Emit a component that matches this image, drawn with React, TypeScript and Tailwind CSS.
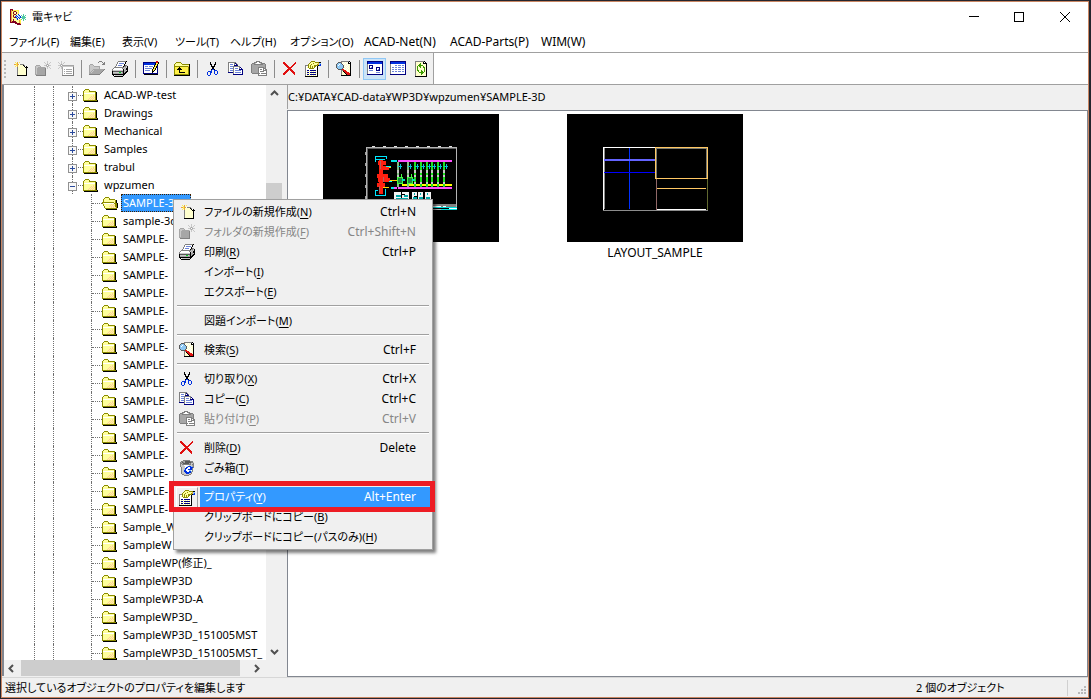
import React from 'react';

/* ---------- pixel icons ---------- */

const COLORS: Record<string, string> = {
    k: '#000000',
    w: '#ffffff',
    g: '#808080',
    h: '#a6a6a6',
    d: '#5a5a5a',
    l: '#c8c8c8',
    y: '#fff04a',
    c: '#ffffce',
    o: '#8c8c00',
    f: '#ffff9c',
    p: '#ffce9c',
    a: '#e8a838',
    b: '#0030e0',
    n: '#000080',
    v: '#6c84d8',
    r: '#e01010',
    m: '#800020',
    s: '#8cc8f4',
    q: '#3c9c00',
    t: '#50c8a0',
    e: '#00d820',
};

const ICONS: Record<string, string[]> = {
    app: [
        'mmm.............',
        'mamyyyyyy.......',
        'mafammyfy.......',
        'mafmfcmfy.......',
        'mafmfcmfy.......',
        'mafammffb....t..',
        'mafmffbwsb.t.t.t',
        'mafmfbsbwsb.ttt.',
        'mafammbwbsbttttt',
        'maffffsbwb..ttt.',
        'mafmfffbffyt.t.t',
        'mafmfffffay..t..',
        'mammmmfffay.....',
        'mmmmmmmffay.....',
        '.....mmmmma.....',
        '.......mmmm.....',
    ],
    newFile: [
        '................',
        '...y.a.y........',
        '....ya..........',
        '..aayaawgggg....',
        '....yaccccckg...',
        '...y.acccccckwk.',
        '.....gccccccckkk',
        '.....gcccccccck.',
        '.....gcccccccck.',
        '.....gcccccccck.',
        '.....gcccccccck.',
        '.....gcccccccck.',
        '.....gcccccccck.',
        '.....gcccccccck.',
        '.....kkkkkkkkkk.',
        '................',
    ],
    newFolder: [
        '............l...',
        '.........l..l..l',
        '..........l.l.l.',
        '...........lhl..',
        '.hhhh....llhwhll',
        'hllllh.....lhl..',
        'hllhhhhhhhl.l.l.',
        'hlhhhhhhhhg.l..l',
        'hlhhhhhhhhg.....',
        'hlhhhhhhhhg.....',
        'hlhhhhhhhhg.....',
        'hlhhhhhhhhg.....',
        'hlhhhhhhhhg.....',
        'hhhhhhhhhhg.....',
        '.gggggggggg.....',
        '................',
    ],
    newList: [
        '...l............',
        'l..l..l.........',
        '.l.l.l..........',
        '..lhl...........',
        'llhwhhhhhhhhhhhh',
        '..lhlllllllllllh',
        '.l.lhwwwwwwwwwwg',
        'l..lhwwwwwwwwwwg',
        '....hwhwhhhhhhwg',
        '....hwwwwwwwwwwg',
        '....hwhwhhhhhhwg',
        '....hwwwwwwwwwwg',
        '....hwhwhhhhhhwg',
        '....hwwwwwwwwwwg',
        '....gggggggggggg',
        '................',
    ],
    open: [
        '..........ggg...',
        '.........g...g.g',
        '..............gg',
        '.hhh.........ggg',
        'hlllh...........',
        'hllllhhhhhh.....',
        'hlllllllllh.....',
        'hlllllllllh.....',
        'hlllhhhhhhhhhhhg',
        'hllhlhhhhhhhhhg.',
        'hlhlhhhhhhhhhg..',
        'hhlhhhhhhhhhg...',
        'hhhhhhhhhhhg....',
        'ggggggggggg.....',
        '................',
        '................',
    ],
    print: [
        '......ggggggggk.',
        '.....gwwwwwwwk..',
        '.....gwvvvvvwk..',
        '....gwwwwwwwk...',
        '....gwvvvvwwkgg.',
        '...gwwwwwwwkgglk',
        '..gggggggggglhlk',
        '.gwwwwwwwwglhlkk',
        'gwwwwwwwwwwklhkk',
        'gllllllllllkhhlk',
        'kddddddddddkhhkk',
        'klllllleelhkhkk.',
        'khhhhhhhhhhkkk..',
        'kkkkkkkkkkkkk...',
        '.kwllllllllk....',
        '..kkkkkkkkk.....',
    ],
    edit: [
        '.............rr.',
        'nnnnnnnnnnnnnrrk',
        'nbbbbbbbbbbbkyyk',
        'nbbbbbbbbbbbkyk.',
        'nwwwwwwwwwwkyyk.',
        'nwvvvwvvvvwkykn.',
        'nwwwwwwwwwkyykn.',
        'nwvvvvvvvwkykwn.',
        'nwwwwwwwwkyykwn.',
        'nwvvvvvwwkykwwn.',
        'nwwwwwwwwkkwwwn.',
        'nwwwwwwwwkwwwwn.',
        'nnnnnnnnnnnnnnn.',
        '.kkkkkkkkkkkkkk.',
        '................',
        '................',
    ],
    up: [
        '................',
        '..ooooo.........',
        '.offfffo........',
        'offfffffoooooook',
        'offffffffffffffk',
        'ooooooooooooooak',
        'oyyyykyyyyyyyyok',
        'oyyykkkyyyyyyyok',
        'oyykkkkkyyyyyyok',
        'oyyyykyyyyyyyyok',
        'oyyyykyyyyyyyyok',
        'oyyyykkkkkkyyyok',
        'oyyyyyyyyyyyyyok',
        'oooooooooooooook',
        'kkkkkkkkkkkkkkkk',
        '................',
    ],
    cut: [
        '................',
        '.....k....k.....',
        '.....k....k.....',
        '.....kk..kk.....',
        '......k..k......',
        '......kkkk......',
        '.......kk.......',
        '.......kk.......',
        '......kbbk......',
        '......b..bbb....',
        '...bbbb..b..b...',
        '..b..bb..b..b...',
        '..b..b...b..b...',
        '..b..b....bb....',
        '...bb...........',
        '................',
    ],
    copy: [
        '................',
        'gggggggg........',
        'gwwwwwgng.......',
        'gwvvvwgwng......',
        'gwwwwwnnnn......',
        'gwvvvggggggg....',
        'gwwwwgwwwwwgn...',
        'gwvvvgwvvvwgwn..',
        'gwwwwgwwwwwnnnn.',
        'gwvvvgwvvvvvvwn.',
        'gwwwwgwwwwwwwwn.',
        'nnnnngwvvvvvvwn.',
        '.....gwwwwwwwwn.',
        '.....nnnnnnnnnn.',
        '................',
        '................',
    ],
    paste: [
        '.....gggg.......',
        '...gggwwggg.....',
        '.ggglwwwwlgggg..',
        'ghhggggggggghhg.',
        'ghhhhhhhhhhhhhg.',
        'ghhhhhhhhhhhhhg.',
        'ghhhhhhgggggghg.',
        'ghhhhhhgwwwwggg.',
        'ghhhhhhgwggwgwgg',
        'ghhhhhhgwwwwgggg',
        'ghhhhhhgwggggwwg',
        'ghhhhhhgwwwwwwwg',
        '.ggggggggwgggggg',
        '.......gwwwwwwwg',
        '.......ggggggggg',
        '................',
    ],
    remove: [
        '................',
        '.rr..........r..',
        '.rrr........rr..',
        '..rrr......rr...',
        '...rrr....rr....',
        '....rrr..rr.....',
        '.....rrrrr......',
        '......rrr.......',
        '.....rrrrr......',
        '....rrr.rrr.....',
        '...rrr...rrr....',
        '..rrr.....rrr...',
        '.rrr.......rr...',
        '.rr.........r...',
        '................',
        '................',
    ],
    props: [
        '......oooo......',
        '.....offffooookk',
        '....offfoffffass',
        '...offofffffoasb',
        'gggofofffooookbb',
        'gwwofofofoowk...',
        'gwfofofofowwk...',
        'gwwwooooowwwk...',
        'gwwwwwwwwwwwk...',
        'gwnnwnnnnnnwk...',
        'gwfwfwfwfwfwk...',
        'gwnnwnnnnnnwk...',
        'gwfwfwfwfwfwk...',
        'gwnnwnnnnnnwk...',
        'gwfwfwfwfwfwk...',
        'kkkkkkkkkkkkk...',
    ],
    find: [
        '.....ggggggggk..',
        '..dddgcwcwcwkwk.',
        '.dsssdwcwcwckkk.',
        'dsswssdwcwcwcwk.',
        'dswssssdcwcwcck.',
        'dssssssdwcwcwck.',
        'dssssssdcwcwcck.',
        '.dssssdcwcwcwck.',
        '..ddddrrcwcwcck.',
        '.....ggrrrcwcck.',
        '.....gckrrrcwck.',
        '.....gcckrrrrck.',
        '.....gccckrrrrk.',
        '.....gcccckrrrk.',
        '.....kkkkkkkkkk.',
        '................',
    ],
    thumbs: [
        'nnnnnnnnnnnnnnnn',
        'nbbbbbbbbbbbbbbn',
        'nbbbbbbbbbbbbbbn',
        'gwwwwwwwwwwwwwwn',
        'gwnnnnwwwwwwwwwn',
        'gwnwwnwwwwwwwwwn',
        'gwnwvnwwwnnnnwwn',
        'gwnnnnwwwnwwnwwn',
        'gwwwwwwwwnwvnwwn',
        'gwvvvvwwwnnnnwwn',
        'gwwwwwwwwwwwwwwn',
        'gwwwwwwwwvvvvwwn',
        'gwwwwwwwwwwwwwwn',
        'nnnnnnnnnnnnnnnn',
        '................',
        '................',
    ],
    list: [
        'nnnnnnnnnnnnnnnn',
        'nbbbbbbbbbbbbbbn',
        'nbbbbbbbbbbbbbbn',
        'gwwwwwwwwwwwwwwn',
        'gwwwwvvwvvvwvvwn',
        'gwwwwwwwwwwwwwwn',
        'gwvvwvvwvvvwvvwn',
        'gwwwwwwwwwwwwwwn',
        'gwvvwvvwvvvwvvwn',
        'gwwwwwwwwwwwwwwn',
        'gwvvwvvwvvvwvvwn',
        'gwwwwwwwwwwwwwwn',
        'gwwwwwwwwwwwwwwn',
        'nnnnnnnnnnnnnnnn',
        '................',
        '................',
    ],
    refresh: [
        '..gggggggggk....',
        '..gccccccckwk...',
        '..gccccqcckkkk..',
        '..gcccqqccccck..',
        '..gccqqqqqccck..',
        '..gcqcqqccqcck..',
        '..gcqccqccqqck..',
        '..gcqccccccqck..',
        '..gcqccccccqck..',
        '..gcqqccqccqck..',
        '..gccqccqqcqck..',
        '..gcccqqqqqcck..',
        '..gcccccqqccck..',
        '..gcccccqcccck..',
        '..gcccccccccck..',
        '..kkkkkkkkkkkk..',
    ],
    recycle: [
        '....ggggggg.....',
        '..gghhdddddggg..',
        '.ghdghddddddggl.',
        '.gghddddddhgllg.',
        '.glggggggggglgg.',
        '.glllwwwwwlllhg.',
        '.gllllwwsbbbshg.',
        '..glllwbbwwbbbg.',
        '..glllbbwwwbbg..',
        '..gllsbwwbbbbg..',
        '..gllbbwwwsswg..',
        '..gllbbbwwbbsg..',
        '..glllbbbbbbg...',
        '..gllllbbbslg...',
        '...gglllllgg....',
        '.....ggggg......',
    ],
    folder: [
        '..oooo..........',
        '.offffo.........',
        'offfffooooooo...',
        'offfffffffffok..',
        'owwwwwwwwwwwok..',
        'offfffffffffok..',
        'offfffffffpfok..',
        'offfffffpfpfok..',
        'offffffpfpfpok..',
        'offfffpfpfpfok..',
        'offffpfpfpfpok..',
        'ooooooooooooook.',
        '.kkkkkkkkkkkkkk.',
    ],
    folderOpen: [
        '...oooo.........',
        '..offffo........',
        '.offfffoooooo...',
        '.offfffffffffok.',
        '.offfffffffffok.',
        'oooooooooooofok.',
        'ofwwwwwwwwwwoook',
        '.offfffffpfpfook',
        '.offffffpfpfpook',
        '..offffpfpfpfook',
        '..offffffpfpfpok',
        '...oooooooooooo.',
        '....kkkkkkkkkkk.',
    ],
};

const PixelIcon: React.FC<{ name: string }> = ({ name }) => {
    const rows = ICONS[name];
    return (
        <svg
            width={16}
            height={rows.length}
            viewBox={`0 0 16 ${rows.length}`}
            shapeRendering="crispEdges"
            className="shrink-0"
            aria-hidden="true"
        >
            {rows.map((row, y) =>
                row.split('').map((ch, x) =>
                    COLORS[ch] ? <rect key={`${x}-${y}`} x={x} y={y} width={1} height={1} fill={COLORS[ch]} /> : null
                )
            )}
        </svg>
    );
};

/* ---------- data ---------- */

const MENUS = [
    { label: 'ファイル(F)', className: 'w-[61px] text-[11px]' },
    { label: '編集(E)', className: 'w-[52px] text-[11px]' },
    { label: '表示(V)', className: 'w-[53px] text-[11px]' },
    { label: 'ツール(T)', className: 'w-[55px] text-[11px]' },
    { label: 'ヘルプ(H)', className: 'w-[60px] text-[11px]' },
    { label: 'オプション(O)', className: 'w-[74px] text-[11px]' },
    { label: 'ACAD-Net(N)', className: 'w-[86px]' },
    { label: 'ACAD-Parts(P)', className: 'w-[91px]' },
    { label: 'WIM(W)', className: 'w-[60px]' },
];

const TOOLS: { icon: string; label: string; disabled?: boolean; active?: boolean }[][] = [
    [
        { icon: 'newFile', label: 'ファイルの新規作成' },
        { icon: 'newFolder', label: 'フォルダの新規作成', disabled: true },
        { icon: 'newList', label: 'リストの新規作成', disabled: true },
    ],
    [
        { icon: 'open', label: '開く', disabled: true },
        { icon: 'print', label: '印刷' },
    ],
    [{ icon: 'edit', label: '編集' }],
    [{ icon: 'up', label: '上へ' }],
    [
        { icon: 'cut', label: '切り取り' },
        { icon: 'copy', label: 'コピー' },
        { icon: 'paste', label: '貼り付け', disabled: true },
    ],
    [
        { icon: 'remove', label: '削除' },
        { icon: 'props', label: 'プロパティ' },
    ],
    [{ icon: 'find', label: '検索' }],
    [
        { icon: 'thumbs', label: '縮小表示', active: true },
        { icon: 'list', label: '一覧' },
        { icon: 'refresh', label: '更新' },
    ],
];

const PARENTS = ['ACAD-WP-test', 'Drawings', 'Mechanical', 'Samples', 'trabul', 'wpzumen'];

const CHILDREN = [
    'SAMPLE-3D',
    'sample-3d',
    ...Array.from({ length: 16 }, () => 'SAMPLE-'),
    'Sample_W',
    'SampleW',
    'SampleWP(修正)_',
    'SampleWP3D',
    'SampleWP3D-A',
    'SampleWP3D_',
    'SampleWP3D_151005MST',
    'SampleWP3D_151005MST_',
];

interface MenuEntry {
    label?: string;
    accel?: string;
    shortcut?: string;
    icon?: string;
    disabled?: boolean;
    selected?: boolean;
}

const CONTEXT_MENU: MenuEntry[] = [
    { label: 'ファイルの新規作成', accel: 'N', shortcut: 'Ctrl+N', icon: 'newFile' },
    { label: 'フォルダの新規作成', accel: 'F', shortcut: 'Ctrl+Shift+N', icon: 'newFolder', disabled: true },
    { label: '印刷', accel: 'R', shortcut: 'Ctrl+P', icon: 'print' },
    { label: 'インポート', accel: 'I' },
    { label: 'エクスポート', accel: 'E' },
    {},
    { label: '図題インポート', accel: 'M' },
    {},
    { label: '検索', accel: 'S', shortcut: 'Ctrl+F', icon: 'find' },
    {},
    { label: '切り取り', accel: 'X', shortcut: 'Ctrl+X', icon: 'cut' },
    { label: 'コピー', accel: 'C', shortcut: 'Ctrl+C', icon: 'copy' },
    { label: '貼り付け', accel: 'P', shortcut: 'Ctrl+V', icon: 'paste', disabled: true },
    {},
    { label: '削除', accel: 'D', shortcut: 'Delete', icon: 'remove' },
    { label: 'ごみ箱', accel: 'T', icon: 'recycle' },
    {},
    { label: 'プロパティ', accel: 'Y', shortcut: 'Alt+Enter', icon: 'props', selected: true },
    { label: 'クリップボードにコピー', accel: 'B' },
    { label: 'クリップボードにコピー(パスのみ)', accel: 'H' },
];

/* ---------- tree ---------- */

const Guide: React.FC = () => <span className="w-[19px] h-full shrink-0 border-l border-dotted border-[#707070]" />;

const Branch: React.FC<{ mark?: '+' | '-' }> = ({ mark }) => (
    <span className="relative w-[11px] h-full shrink-0 border-l border-dotted border-[#707070] flex items-center">
        <span className="w-full border-t border-dotted border-[#707070]" />
        {mark && (
            <svg width="9" height="9" className="absolute -left-[5px] top-[6px]" shapeRendering="crispEdges">
                <rect x="0.5" y="0.5" width="8" height="8" fill="#f8f8f8" stroke="#919191" />
                <rect x="2" y="4" width="5" height="1" fill="#2a4a9c" />
                {mark === '+' && <rect x="4" y="2" width="1" height="5" fill="#2a4a9c" />}
            </svg>
        )}
    </span>
);

const FolderTree: React.FC = () => (
    <ul className="flex-1 min-h-0 overflow-hidden pt-px text-[11px]">
        {PARENTS.map((name) => (
            <li key={name} className="h-[18px] pl-[30px] flex items-center">
                <Guide />
                <Guide />
                <Branch mark={name === 'wpzumen' ? '-' : '+'} />
                <span className="pt-px"><PixelIcon name="folder" /></span>
                <span className="pl-[5px] whitespace-nowrap">{name}</span>
            </li>
        ))}
        {CHILDREN.map((name, i) => (
            <li key={i} className="h-[18px] pl-[30px] flex items-center">
                <Guide />
                <span className="w-[38px] h-full shrink-0 border-l border-dotted border-[#707070]" />
                <Branch />
                <span className="pt-px"><PixelIcon name={i === 0 ? 'folderOpen' : 'folder'} /></span>
                <span
                    className={
                        i === 0
                            ? 'ml-[3px] pl-px pr-[8px] h-[18px] leading-[16px] whitespace-nowrap text-white bg-[#3399ff] border border-dotted border-[#402000]'
                            : 'ml-[5px] whitespace-nowrap'
                    }
                >
                    {name}
                </span>
            </li>
        ))}
    </ul>
);

const Arrow: React.FC<{ d: string }> = ({ d }) => (
    <svg width="9" height="9" viewBox="0 0 9 9" fill="none" stroke="#505050" strokeWidth="2">
        <path d={d} />
    </svg>
);

/* ---------- drawings ---------- */

const RUNGS = [75, 85, 92, 98, 104, 109, 115, 121];

const CircuitDrawing: React.FC = () => (
    <svg width="176" height="128" className="bg-black" shapeRendering="crispEdges" role="img" aria-label="回路図">
        <g fill="none" stroke="#b4b4b4">
            <path d="M43.5 33V96M43 33.5H134M133.5 33V96M43 95.5H134" />
            <path d="M44.5 34V95M44 34.5H133" stroke="#606060" />
            <path d="M42.5 38V96" stroke="#a0a0a0" strokeDasharray="3 8" />
            <path d="M49 32.5H134" stroke="#e0e0e0" strokeDasharray="3 8" />
        </g>
        <path d="M71 47h3M75 47h54M71 74h3M75 74h54" stroke="#ff50ff" strokeWidth="2" />
        <path d="M68 47h3M71 47h3M68 74h3" stroke="#00e8e8" strokeWidth="2" />
        <path d="M79 71H129" stroke="#ffff00" strokeWidth="2" />
        <path d="M60 53h8M60 66h14M60 73h6" stroke="#ffd800" strokeWidth="1" />
        {/* motor and breaker column */}
        <path d="M58 46V80M55 49h8M56 54h10M54 62h11M55 66h12M54 71h8" stroke="#ff2010" strokeWidth="4" />
        <path d="M57 47v8M60 63v5M56 72v7" stroke="#b06060" strokeWidth="1" />
        <path d="M53 45h9M52 42h11v3M52 42v6M55 76h-3v5h10v-6" fill="none" stroke="#00e8ff" strokeWidth="1" />
        <path d="M63 52h5M66 67h3" stroke="#00ffff" />
        {RUNGS.map((x, i) => (
            <g key={x}>
                <path d={`M${x} 48V73`} stroke={i < 2 ? '#80c080' : '#20e020'} strokeWidth={2} />
                <path d={`M${x} 52.5h4M${x + 2.5} 50v5`} stroke="#00c8d8" />
                <path d={`M${x} 56v3M${x} 61v2M${x} 68v2`} stroke="#c8c8c8" strokeWidth={2} />
            </g>
        ))}
        <path d="M74 63h5v6h-5zM84 63h5v6h-5zM78 60v4M88 60v4" stroke="#40ff40" fill="#208840" />
        <path d="M79 66h3M89 66h3" stroke="#00e0c0" strokeWidth="2" />
        <path d="M71 78h7v10h-7zM79 78h7v10h-7zM89 78h5v10h-5zM95 78h5v10h-5zM102 78h6v10h-6z" fill="#f4f4f4" />
        <path d="M73 82h5M81 82h4M73 85h12M91 80h1M97 80h1M104 80h1M90 84h4M96 84h4M103 84h4" stroke="#00a8a8" strokeWidth="2" />
        <path d="M91 82h3M97 86h3M103 87h3M79 80h3" stroke="#000" />
        <path d="M110 91.5H133" stroke="#808080" strokeWidth="3" />
        <path d="M110 93.5H134M118 95.5H134" stroke="#00e0e0" />
        <path d="M110 92.5h8M120 92.5h3M126 94.5h8" stroke="#fff" />
    </svg>
);

const LayoutDrawing: React.FC = () => (
    <svg width="176" height="128" className="bg-black" shapeRendering="crispEdges" role="img" aria-label="LAYOUT_SAMPLE">
        <g fill="none">
            <path d="M36.5 96V33.5H89" stroke="#ffffff" />
            <path d="M37.5 34V95" stroke="#8c8c8c" />
            <path d="M36 96.5H141" stroke="#8c8c8c" />
            <path d="M90 95.5H139" stroke="#ffffff" />
            <path d="M62.5 34V95" stroke="#0030ff" />
            <path d="M37 46H88" stroke="#6464ff" strokeWidth="2" />
            <path d="M37 58.5H88" stroke="#0000ff" />
            <path d="M89.5 64V96" stroke="#906868" />
            <path d="M140.5 64V96" stroke="#606830" />
            <path d="M89.5 64V34.5H139.5V64" stroke="#7c7c70" />
            <path d="M88.5 64.5V33.5H140.5V64.5Z" stroke="#ffc864" />
            <path d="M90 74.5H139" stroke="#ffc864" />
        </g>
    </svg>
);

/* ---------- context menu ---------- */

const ContextMenu: React.FC = () => (
    <div
        role="menu"
        className="absolute left-[173px] top-[199px] w-[260px] py-[2px] px-[2px] bg-[#f0f0f0] border border-[#a0a0a0] shadow-[3px_3px_3px_rgba(0,0,0,0.5)]"
    >
        {CONTEXT_MENU.map((item, i) =>
            item.label ? (
                <button
                    key={i}
                    role="menuitem"
                    disabled={item.disabled}
                    className={`flex w-full h-[20px] items-center text-left whitespace-nowrap ${
                        item.disabled ? 'text-[#868686]' : item.selected ? 'text-white' : 'text-black'
                    }`}
                >
                    <span
                        className={
                            item.selected
                                ? 'w-[22px] h-full flex items-center justify-center border-t border-l border-white border-r border-r-[#a0a0a0]'
                                : 'w-[22px] h-full flex items-center justify-center'
                        }
                    >
                        {item.icon && <PixelIcon name={item.icon} />}
                    </span>
                    <span
                        className={`flex flex-1 h-full ml-[2px] pl-[4px] pr-[14px] items-center justify-between ${
                            item.selected ? 'bg-[#3399ff]' : ''
                        }`}
                    >
                        <span className="text-[11px]">
                            {item.label}(<u className="underline-offset-2">{item.accel}</u>)
                        </span>
                        <span>{item.shortcut}</span>
                    </span>
                </button>
            ) : (
                <div key={i} role="separator" className="h-[9px] px-[1px] pt-[3px]">
                    <div className="h-[2px] border-t border-[#a0a0a0] bg-white" />
                </div>
            )
        )}
    </div>
);

/* ---------- window ---------- */

export default function App() {
    return (
        <div className="relative h-screen overflow-hidden bg-[#24252e] pt-px pl-px pr-[2px] pb-px text-[12px] leading-[18px] text-black font-['Noto_Sans','Noto_Sans_CJK_JP',sans-serif] [font-feature-settings:'palt']">
            <div className="h-full flex flex-col bg-[#f0f0f0] border border-[#c98663]">
                {/* Title bar */}
                <header className="h-[30px] shrink-0 bg-white flex items-center justify-between">
                    <div className="flex items-center gap-[6px] pl-[8px]">
                        <PixelIcon name="app" />
                        <h1 className="text-[11px]">電キャビ</h1>
                    </div>
                    <div className="flex h-full">
                        <button aria-label="最小化" className="w-[45px] flex items-center justify-center">
                            <svg width="10" height="10" shapeRendering="crispEdges"><path d="M0 4.5H10" stroke="#000" /></svg>
                        </button>
                        <button aria-label="最大化" className="w-[46px] flex items-center justify-center">
                            <svg width="10" height="10" shapeRendering="crispEdges"><path d="M.5.5H9.5V9.5H.5Z" fill="none" stroke="#000" /></svg>
                        </button>
                        <button aria-label="閉じる" className="w-[46px] flex items-center justify-center">
                            <svg width="10" height="10"><path d="M0 0L10 10M10 0L0 10" stroke="#000" /></svg>
                        </button>
                    </div>
                </header>

                {/* Menu bar */}
                <nav className="h-[21px] shrink-0 bg-white border-b border-[#a0a0a0] flex items-center pl-[7px]">
                    {MENUS.map((menu) => (
                        <button key={menu.label} className={`${menu.className} shrink-0 text-left whitespace-nowrap`}>
                            {menu.label}
                        </button>
                    ))}
                </nav>

                {/* Toolbar */}
                <div className="h-[32px] shrink-0 bg-white border-b border-[#a0a0a0] flex">
                    <div role="toolbar" className="bg-[#f0f0f0] border-r border-[#a0a0a0] pr-px flex items-center">
                        <span className="w-[6px] h-[18px] flex flex-col justify-between items-center">
                            {[0, 1, 2, 3, 4].map((n) => (
                                <span key={n} className="size-[2px] bg-[#b8b8b8]" />
                            ))}
                        </span>
                        {TOOLS.map((group, g) => (
                            <React.Fragment key={g}>
                                {g > 0 && (
                                    <span className="w-[8px] flex justify-center">
                                        <span className="w-px h-[18px] bg-[#8c8c8c]" />
                                    </span>
                                )}
                                {group.map((tool) => (
                                    <button
                                        key={tool.icon}
                                        aria-label={tool.label}
                                        disabled={tool.disabled}
                                        className={
                                            tool.active
                                                ? 'w-[23px] h-[22px] flex items-center justify-center bg-[#cce4f7] border border-[#90c8f6]'
                                                : 'w-[23px] h-[22px] flex items-center justify-center'
                                        }
                                    >
                                        <PixelIcon name={tool.icon} />
                                    </button>
                                ))}
                            </React.Fragment>
                        ))}
                    </div>
                </div>

                {/* Tree + list */}
                <main className="flex-1 min-h-0 flex">
                    <section className="w-[280px] shrink-0 mb-px border-l-2 border-[#828790] flex flex-col">
                        <div className="flex-1 min-h-0 flex">
                            <div className="flex-1 min-w-0 bg-white flex flex-col">
                                <FolderTree />
                            </div>
                            <div className="w-[16px] shrink-0 flex flex-col items-center justify-between py-[4px]">
                                <Arrow d="M1 6L4.5 2.5L8 6" />
                                <span className="w-full flex-1 pt-[85px] pb-[240px] flex">
                                    <span className="flex-1 bg-[#cdcdcd]" />
                                </span>
                                <Arrow d="M1 3L4.5 6.5L8 3" />
                            </div>
                        </div>
                        <div className="h-[16px] shrink-0 flex items-center pl-[3px] pr-[21px]">
                            <Arrow d="M6 1L2.5 4.5L6 8" />
                            <span className="flex-1 h-full ml-[5px] mr-[12px] bg-[#cdcdcd]" />
                            <Arrow d="M3 1L6.5 4.5L3 8" />
                        </div>
                    </section>

                    <section className="flex-1 min-w-0 ml-[5px] flex flex-col">
                        <div className="h-[24px] shrink-0 border-l border-[#a0a0a0] flex items-center text-[11px]">
                            C:¥DATA¥CAD-data¥WP3D¥wpzumen¥SAMPLE-3D
                        </div>
                        <div className="flex-1 mt-px bg-white border border-[#828790] flex pl-px pt-[3px]">
                            <figure className="w-[244px] flex flex-col items-center">
                                <CircuitDrawing />
                            </figure>
                            <figure className="w-[244px] flex flex-col items-center">
                                <LayoutDrawing />
                                <figcaption className="pt-[2px]">LAYOUT_SAMPLE</figcaption>
                            </figure>
                        </div>
                    </section>
                </main>

                {/* Status bar */}
                <footer className="h-[20px] shrink-0 border-t border-[#d7d7d7] flex items-center pl-[3px] text-[11px]">
                    <span className="flex-1">選択しているオブジェクトのプロパティを編集します</span>
                    <span className="w-[152px] h-[16px] border-r border-[#d0d0d0] flex items-center">2 個のオブジェクト</span>
                    <svg width="20" height="18" shapeRendering="crispEdges" aria-hidden="true">
                        <path d="M16 7h2v2h-2zM13 10h2v2h-2zM16 10h2v2h-2zM10 13h2v2h-2zM13 13h2v2h-2zM16 13h2v2h-2z" fill="#b8b8b8" />
                    </svg>
                </footer>
            </div>

            <ContextMenu />
            <div className="absolute left-[169px] top-[481px] w-[266px] h-[31px] border-[5px] border-[#ed1c24]" />
        </div>
    );
}
